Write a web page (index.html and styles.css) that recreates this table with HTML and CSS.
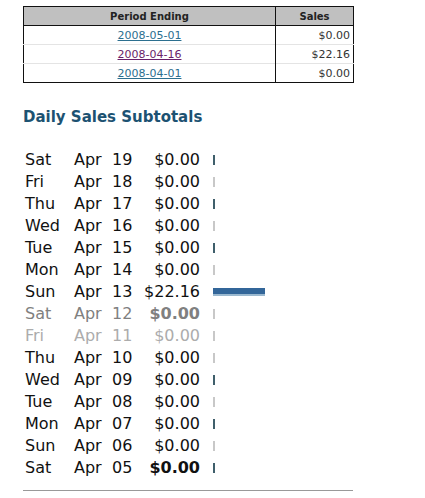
FILE: index.html
```html
<!DOCTYPE html>
<html>
<head>
<meta charset="utf-8">
<link rel="stylesheet" href="styles.css">
</head>
<body>
<table class="periods">
  <thead>
    <tr><th class="pe">Period Ending</th><th class="sa">Sales</th></tr>
  </thead>
  <tbody>
    <tr><td class="pe"><a href="#">2008-05-01</a></td><td class="sa">$0.00</td></tr>
    <tr><td class="pe"><a href="#" class="visited">2008-04-16</a></td><td class="sa">$22.16</td></tr>
    <tr><td class="pe"><a href="#">2008-04-01</a></td><td class="sa">$0.00</td></tr>
  </tbody>
</table>

<h2 class="title">Daily Sales Subtotals</h2>

<div class="daily">
  <div class="row"><span>Sat</span><span>Apr</span><span>19</span><span class="amt">$0.00</span><span class="tick dark"></span></div>
  <div class="row"><span>Fri</span><span>Apr</span><span>18</span><span class="amt">$0.00</span><span class="tick light"></span></div>
  <div class="row"><span>Thu</span><span>Apr</span><span>17</span><span class="amt">$0.00</span><span class="tick dark"></span></div>
  <div class="row"><span>Wed</span><span>Apr</span><span>16</span><span class="amt">$0.00</span><span class="tick light"></span></div>
  <div class="row"><span>Tue</span><span>Apr</span><span>15</span><span class="amt">$0.00</span><span class="tick dark"></span></div>
  <div class="row"><span>Mon</span><span>Apr</span><span>14</span><span class="amt">$0.00</span><span class="tick light"></span></div>
  <div class="row"><span>Sun</span><span>Apr</span><span>13</span><span class="amt">$22.16</span><span class="bar" style="width:52px"></span></div>
  <div class="row grey"><span>Sat</span><span>Apr</span><span>12</span><span class="amt bold">$0.00</span><span class="tick light"></span></div>
  <div class="row pale"><span>Fri</span><span>Apr</span><span>11</span><span class="amt">$0.00</span><span class="tick light"></span></div>
  <div class="row"><span>Thu</span><span>Apr</span><span>10</span><span class="amt">$0.00</span><span class="tick light"></span></div>
  <div class="row"><span>Wed</span><span>Apr</span><span>09</span><span class="amt">$0.00</span><span class="tick dark"></span></div>
  <div class="row"><span>Tue</span><span>Apr</span><span>08</span><span class="amt">$0.00</span><span class="tick light"></span></div>
  <div class="row"><span>Mon</span><span>Apr</span><span>07</span><span class="amt">$0.00</span><span class="tick dark"></span></div>
  <div class="row"><span>Sun</span><span>Apr</span><span>06</span><span class="amt">$0.00</span><span class="tick light"></span></div>
  <div class="row"><span>Sat</span><span>Apr</span><span>05</span><span class="amt bold">$0.00</span><span class="tick dark"></span></div>
</div>

<hr class="rule">
</body>
</html>
```

FILE: styles.css
```css
html, body {
  margin: 0;
  padding: 0;
  background: #ffffff;
}
body {
  padding: 6px 0 0 23px;
  font-family: "DejaVu Sans", Verdana, sans-serif;
  color: #111;
}
.periods {
  border-collapse: collapse;
  width: 331px;
  border: 1px solid #111;
  font-size: 11px;
}
.periods th {
  background: #c0c0c0;
  font-weight: bold;
  font-size: 10px;
  height: 18px;
  padding: 0 3px;
  border-bottom: 1px solid #111;
  text-align: center;
  color: #222;
}
.periods th.sa, .periods td.sa {
  border-left: 1px solid #111;
}
.periods .pe { width: 245px; }
.periods td {
  height: 18px;
  padding: 0 3px;
  border-top: 1px solid #e4e4e4;
  color: #333;
}
.periods td.pe { text-align: center; }
.periods td.sa { text-align: right; }
.periods a { color: #2b6f8f; text-decoration: underline; }
.periods a.visited { color: #6a1f6a; }

.title {
  margin: 24px 0 0 0;
  font-size: 15px;
  font-weight: bold;
  color: #1d5272;
  height: 20px;
  line-height: 20px;
}
.daily {
  margin-top: 22px;
  margin-left: 2px;
  font-size: 16px;
}
.row {
  display: grid;
  grid-template-columns: 49px 38px 32px 56px 58px;
  align-items: center;
  height: 22px;
  line-height: 22px;
  color: #111;
}
.row .amt { text-align: right; }
.row .bold { font-weight: bold; }
.row.grey { color: #808080; }
.row.pale { color: #acacac; }
.tick {
  justify-self: start;
  margin-left: 13px;
  width: 2px;
  height: 10px;
}
.tick.dark { background: #3f5f6b; }
.tick.light { background: #c8c8c8; }
.bar {
  justify-self: start;
  margin-left: 13px;
  height: 6px;
  background: #336699;
  border-bottom: 2px solid #9ab8cf;
}
.rule {
  width: 330px;
  margin: 11px 0 0 0;
  border: 0;
  border-top: 1px solid #999;
  height: 0;
}
```
